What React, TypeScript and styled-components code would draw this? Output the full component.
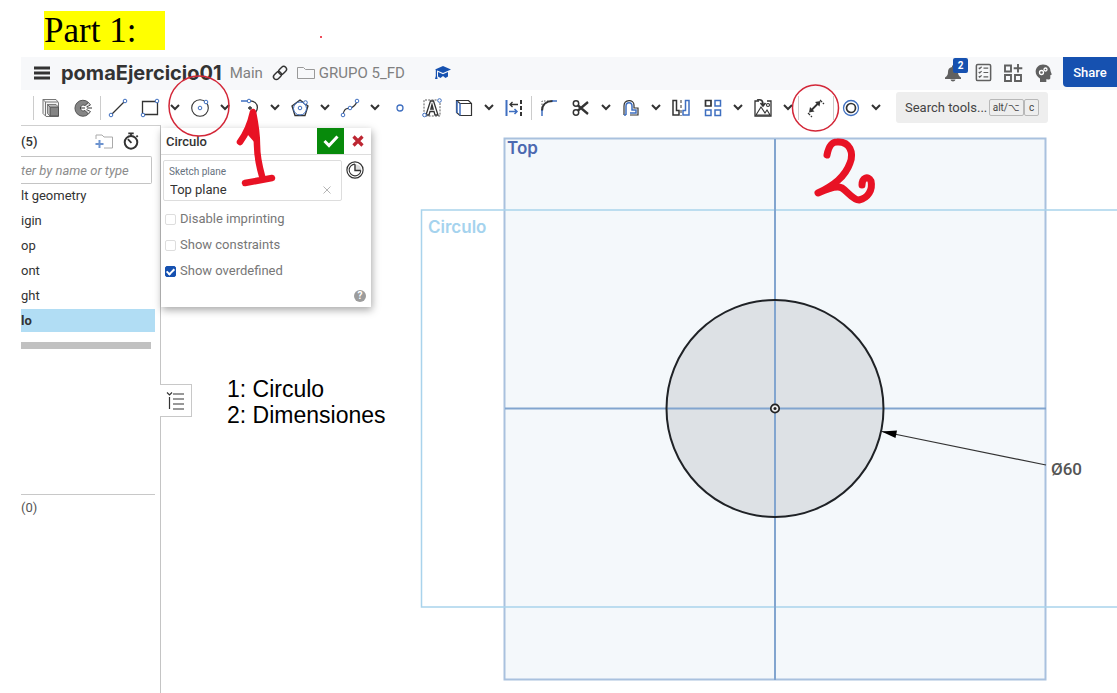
import React from "react";
import styled, { createGlobalStyle } from "styled-components";

const ink = "#333333";
const blue = "#3f6fc0";
const red = "#e81224";

const GlobalStyle = createGlobalStyle`
  * { box-sizing: border-box; }
  body { margin: 0; background: #ffffff; color: ${ink}; font-family: Roboto, "Liberation Sans", sans-serif; font-size: 13px; }
  button, input { font: inherit; color: inherit; }
`;

const Page = styled.div`
  position: relative;
  display: flex;
  flex-direction: column;
  min-height: 100vh;
  overflow: hidden;
`;
const Heading = styled.h1`
  margin: 0;
  padding: 11px 44px 7px;
  font: 400 35px/39px "Liberation Serif", serif;
  color: #000000;
`;
const Highlight = styled.mark`
  display: block;
  width: 121px;
  background: #ffff00;
  color: inherit;
`;
const AppWindow = styled.main`
  display: flex;
  flex: 1;
  flex-direction: column;
  margin-left: 21px;
`;
const DocumentBar = styled.header`
  display: flex;
  align-items: center;
  height: 33px;
  padding: 0 0 2px 9px;
  background: #f7f8fa;
`;
const BarButton = styled.button<{ $width?: number }>`
  position: relative;
  display: grid;
  place-items: center;
  flex: none;
  width: ${(p) => p.$width ?? 30}px;
  height: 30px;
  padding: 0;
  border: 0;
  background: none;
`;
const DocumentName = styled.h2`
  margin: 0 8px 0 7px;
  font-family: Inter, Roboto, sans-serif;
  font-size: 20px;
  line-height: 24px;
  font-weight: 700;
`;
const Crumb = styled.a`
  display: flex;
  align-items: center;
  gap: 4px;
  color: #808080;
  font-size: 15px;
  line-height: 20px;
  text-decoration: none;
  white-space: nowrap;
`;
const Badge = styled.span`
  position: absolute;
  top: 0;
  right: 0;
  width: 15px;
  border-radius: 2px;
  background: #1651b0;
  color: #ffffff;
  font-size: 10px;
  line-height: 15px;
  font-weight: 700;
`;
const Spacer = styled.div`
  flex: 1;
`;
const ShareButton = styled.button`
  align-self: flex-start;
  width: 54px;
  height: 30px;
  margin-left: 5px;
  padding: 0;
  border: 0;
  border-radius: 0 0 0 4px;
  background: #1651b0;
  color: #ffffff;
  font-size: 13px;
  font-weight: 500;
`;
const Toolbar = styled.nav`
  display: flex;
  align-items: center;
  height: 35px;
  padding-left: 11px;
`;
const Divider = styled.span`
  flex: none;
  width: 1px;
  height: 24px;
  margin: 0 1px;
  background: #cccccc;
`;
const ToolButton = styled.button`
  display: grid;
  place-items: center;
  flex: none;
  width: 32px;
  height: 32px;
  padding: 0;
  border: 0;
  background: none;
`;
const MenuButton = styled(ToolButton)`
  width: 18px;
`;
const SearchTools = styled.button`
  display: flex;
  align-items: center;
  flex: none;
  width: 152px;
  height: 31px;
  margin-left: 11px;
  padding: 0 9px;
  border: 0;
  border-radius: 3px;
  background: #eeeeee;
  color: #444444;
  font-size: 13px;
  white-space: nowrap;
`;
const SearchText = styled.span`
  flex: 1;
  text-align: left;
`;
const Key = styled.kbd`
  min-width: 15px;
  padding: 0 3px;
  border: 1px solid #b8b8b8;
  border-radius: 2px;
  font: 10px/15px Roboto, sans-serif;
`;
const Workspace = styled.div`
  display: grid;
  grid-template-columns: 140px 1fr;
  flex: 1;
`;
const Sidebar = styled.aside`
  display: flex;
  flex-direction: column;
  border-top: 1px solid #cfcfcf;
  border-right: 1px solid #c4c4c4;
  padding-right: 5px;
`;
const SidebarHead = styled.div`
  display: flex;
  align-items: center;
  height: 30px;
  padding-right: 12px;
  font-weight: 500;
`;
const FilterInput = styled.input`
  width: 131px;
  height: 28px;
  padding: 0;
  border: 1px solid #c4c4c4;
  border-left: 0;
  border-radius: 0 2px 2px 0;
  outline: none;
  &::placeholder { color: #8c8c8c; font-style: italic; opacity: 1; }
`;
const FeatureList = styled.ul`
  margin: 0;
  padding: 0;
  list-style: none;
`;
const Feature = styled.li<{ $selected?: boolean }>`
  height: 23px;
  margin-bottom: 2px;
  line-height: 24px;
  background: ${(p) => (p.$selected ? "#b1ddf4" : "none")};
  font-weight: ${(p) => (p.$selected ? 700 : 400)};
`;
const RollbackBar = styled.div`
  width: 130px;
  height: 7px;
  margin-top: 8px;
  background: #c1c1c1;
`;
const Parts = styled.div`
  margin-top: 145px;
  padding-top: 3px;
  border-top: 1px solid #c8c8c8;
  line-height: 20px;
  color: #555555;
`;
const Canvas = styled.section`
  position: relative;
  min-height: 567px;
`;
const Drawing = styled.svg`
  position: absolute;
  inset: 0;
  width: 100%;
  height: 100%;
  font-family: Inter, Roboto, sans-serif;
  font-size: 17px;
  font-weight: 600;
`;
const DimensionText = styled.text`
  fill: #555555;
  font-family: Roboto, sans-serif;
  font-weight: 500;
`;
const Dialog = styled.form`
  position: absolute;
  top: 3px;
  left: 0;
  width: 210px;
  height: 179px;
  background: #ffffff;
  box-shadow: 1px 3px 8px rgba(0, 0, 0, 0.35);
`;
const DialogHead = styled.div`
  display: flex;
  align-items: stretch;
  height: 27px;
  border-bottom: 1px solid #dddddd;
`;
const DialogTitle = styled.h3`
  flex: 1;
  margin: 0;
  padding-left: 5px;
  font-size: 13px;
  line-height: 28px;
  font-weight: 500;
`;
const DialogButton = styled.button<{ $accept?: boolean }>`
  display: grid;
  place-items: center;
  width: 27px;
  padding: 0;
  border: 0;
  background: ${(p) => (p.$accept ? "#078a0b" : "none")};
`;
const PlaneRow = styled.div`
  display: flex;
  align-items: flex-start;
  gap: 4px;
  padding: 5px 0 0 2px;
`;
const PlaneField = styled.div`
  display: grid;
  grid-template-columns: 1fr 28px;
  width: 179px;
  height: 41px;
  padding: 3px 0 0 5px;
  border: 1px solid #dddddd;
  border-radius: 2px;
`;
const PlaneLabel = styled.label`
  grid-column: 1 / -1;
  color: #66717d;
  font-size: 10px;
  line-height: 16px;
`;
const PlaneInput = styled.input`
  width: 100%;
  height: 18px;
  padding: 0 0 0 1px;
  border: 0;
  outline: none;
  background: none;
`;
const SmallButton = styled.button`
  display: grid;
  place-items: center;
  height: 20px;
  padding: 0;
  border: 0;
  background: none;
`;
const Options = styled.div`
  display: grid;
  gap: 6px;
  padding: 8px 0 0 4px;
`;
const Option = styled.label`
  display: flex;
  align-items: center;
  gap: 4px;
  line-height: 20px;
  color: #777777;
`;
const CheckBox = styled.input`
  appearance: none;
  display: grid;
  place-items: center;
  width: 11px;
  height: 11px;
  margin: 0;
  border: 1px solid #dddddd;
  border-radius: 2px;
  &:checked { background: #1651b0; border-color: #1651b0; }
  &:checked::after {
    content: "";
    width: 3px;
    height: 6px;
    margin-bottom: 2px;
    border: solid #ffffff;
    border-width: 0 2px 2px 0;
    transform: rotate(45deg);
  }
`;
const HelpButton = styled.button`
  position: absolute;
  right: 5px;
  bottom: 5px;
  width: 12px;
  height: 12px;
  padding: 0;
  border: 0;
  border-radius: 50%;
  background: #9c9c9c;
  color: #ffffff;
  font-size: 10px;
  line-height: 12px;
  font-weight: 700;
`;
const ListToggle = styled.button`
  position: absolute;
  top: 259px;
  left: -1px;
  display: grid;
  place-items: center;
  width: 32px;
  height: 33px;
  padding: 0;
  border: 1px solid #c8c8c8;
  border-left: 0;
  background: #ffffff;
`;
const Note = styled.p`
  position: absolute;
  top: 251px;
  left: 66px;
  margin: 0;
  color: #000000;
  font: 23px/26px "Liberation Sans", sans-serif;
  white-space: pre-line;
`;
const Markup = styled.svg`
  position: absolute;
  top: 0;
  left: 0;
  pointer-events: none;
`;

function Icon({ children, size = 20 }: { children: React.ReactNode; size?: number }) {
  return (
    <svg width={size} height={size} viewBox="0 0 20 20" fill="none" stroke={ink} strokeWidth="1.3" aria-hidden="true">
      {children}
    </svg>
  );
}

function Dot({ x, y }: { x: number; y: number }) {
  return <circle cx={x} cy={y} r="1.8" fill="#ffffff" stroke={blue} strokeWidth="1" />;
}

type Tool = { name: string; menu?: boolean; icon: React.ReactNode };

const solidTools: Tool[] = [
  { name: "Extrude", icon: <><path d="M2 1.500h13l2.500 3v14H5l-3-3z" fill="#f4f4f4" stroke="#777" strokeWidth="1" /><path d="M4.500 18V4H17M2 1.500l2.500 2.500" stroke="#777" strokeWidth="1" /><path d="M9 9h8.500v9H9z" fill="#858585" stroke="#555" strokeWidth="1" /><path d="M9 18V9L6.500 6.500v9zM6.500 6.500H15L17.500 9H9z" fill="#bbb" stroke="#666" strokeWidth=".8" /></> },
  { name: "Revolve", icon: <><path d="M15.500 4.500A8 8 0 1 0 15.500 16L12 12.500a3 3 0 1 1 0-5z" fill="#858585" stroke="#555" strokeWidth="1" /><path d="M12 7.500l3.500-3 2 2.500-4 2M12 12.500l3.500 3.500 2-2.500-4-2" fill="#ddd" stroke="#555" strokeWidth="1" /><path d="M7 10h12" strokeDasharray="5 2" strokeWidth="1" /></> },
];

const drawTools: Tool[] = [
  { name: "Line", icon: <><path d="M3.500 16.500l13-13" /><Dot x={3} y={17} /><Dot x={17} y={3} /></> },
  { name: "Corner rectangle", menu: true, icon: <><path d="M2.500 3.500h15v13h-15z" /><Dot x={3} y={17} /><Dot x={17} y={3} /></> },
  { name: "Center point circle", menu: true, icon: <><circle cx="10" cy="10" r="8.300" strokeWidth="1.100" /><Dot x={10} y={10} /><Dot x={16} y={4} /></> },
  { name: "Tangent arc", menu: true, icon: <><path d="M1 3h7" stroke={blue} strokeWidth="1.500" /><path d="M9 3c11-1 11 13 1 14M10 8v4M8 10h4" /><Dot x={9} y={3} /></> },
  { name: "Polygon", menu: true, icon: <><path d="M10 2l8 6-3 9.500H5L2 8z" /><circle cx="10" cy="10.500" r="6.500" stroke={blue} strokeWidth="1" /><Dot x={10} y={10} /><Dot x={15.5} y={4.5} /></> },
  { name: "Spline", menu: true, icon: <><path d="M3 17C4 9 8 11 10 10c4-1 6-3 7-7" strokeWidth="1.100" /><Dot x={3} y={17} /><Dot x={10} y={10} /><Dot x={17} y={3} /></> },
  { name: "Point", icon: <circle cx="10" cy="10" r="3" stroke={blue} strokeWidth="1.300" /> },
  { name: "Text", icon: <><path d="M2 17V2h14M18 5v13H4" strokeDasharray="2 1.200" strokeWidth=".8" /><path d="M4 17L8.500 3h3L16 17h-3l-1-3.500H8L7 17zM8.800 11h2.400L10 6.500z" strokeWidth="1.300" /><Dot x={2.5} y={17} /><Dot x={17.5} y={2.5} /></> },
  { name: "Use projection", menu: true, icon: <><path d="M2.500 2.500h12l3 3v12H6l-3.500-3zM2.500 2.500l3.500 3h11.500" strokeWidth="1.200" /><path d="M6 5.500v12M3 3v12" stroke={blue} strokeWidth="1.500" /></> },
  { name: "Construction", icon: <><path d="M2.500 2v16" stroke={blue} strokeWidth="2" /><path d="M17 2v16" strokeWidth="2" strokeDasharray="4 2" /><path d="M14 6.500H6M8.500 4L6 6.500 8.500 9" /><path d="M5 13.500h8M10.500 11l2.500 2.500-2.500 2.500" stroke={blue} strokeWidth="1.500" /></> },
];

const editTools: Tool[] = [
  { name: "Sketch fillet", icon: <><path d="M3 13C3 7 7 3 14 3" strokeWidth="2" /><path d="M3 12v6M13 3h5" stroke={blue} strokeWidth="1.500" /><path d="M3 10V3h8" strokeWidth=".8" strokeDasharray="1.500 1.500" /></> },
  { name: "Trim", menu: true, icon: <><circle cx="5" cy="5.500" r="2.700" strokeWidth="1.500" /><circle cx="5" cy="14.500" r="2.700" strokeWidth="1.500" /><path d="M7 7.500l10 8.500M7 12.500L17 4" strokeWidth="2.300" /></> },
  { name: "Offset", menu: true, icon: <><path d="M3 17V8C3 1 13 1 13 7v3h4v7H9" strokeWidth="1.200" /><path d="M5 17V8c0-4.500 6-4.500 6 0v4h4v3H9M3 17h2" stroke={blue} strokeWidth="1.500" /></> },
  { name: "Mirror", icon: <><path d="M2 2.500h3.500v10H8v4.500H2z" strokeWidth="1.500" /><path d="M18 2.500h-3.500v10H12v4.500h6z" stroke={blue} strokeWidth="1.500" /><path d="M10 2v16" strokeWidth="1" strokeDasharray="3 2" /></> },
  { name: "Linear pattern", menu: true, icon: <><path d="M2.500 2.500h5.500v5.500H2.500z" strokeWidth="1.700" /><path d="M12 2.500h5.500v5.500H12zM2.500 12h5.500v5.500H2.500zM12 12h5.500v5.500H12z" stroke={blue} strokeWidth="1.500" /></> },
  { name: "Insert image", menu: true, icon: <><path d="M6 3H2v15h16V3h-4" /><path d="M3 17l5-8 4 6 2-3 3 5z" strokeWidth="1.100" /><circle cx="15" cy="7" r="1.500" strokeWidth="1.100" /><path d="M4 2c5-1 6 1 6 5M7.500 5L10 8l2.500-3" strokeWidth="1.700" /></> },
];

const dimensionTool: Tool = {
  name: "Dimension",
  icon: <><path d="M5 12.500L12.500 5" strokeWidth="1.800" /><path d="M3 14.500l1-5.500 4.500 4.500zM14.500 3l-1 5.500L9 4z" fill={ink} stroke="none" /><path d="M2 15l4 4M14 2l4 4" strokeWidth="1.200" strokeDasharray="3 1" /></>,
};

const constraintTool: Tool = {
  name: "Concentric",
  menu: true,
  icon: <><circle cx="10" cy="10" r="7.500" stroke={blue} strokeWidth="1.300" /><circle cx="10" cy="10" r="4.500" strokeWidth="1.700" /></>,
};

function ToolItem({ tool }: { tool: Tool }) {
  return (
    <>
      <ToolButton type="button" aria-label={tool.name}><Icon>{tool.icon}</Icon></ToolButton>
      {tool.menu && (
        <MenuButton type="button" aria-label={`${tool.name} options`}>
          <svg width="10" height="7" viewBox="0 0 10 7" fill="none" stroke={ink} strokeWidth="2"><path d="M1 1l4 4 4-4" /></svg>
        </MenuButton>
      )}
    </>
  );
}

function DocumentHeader() {
  return (
    <DocumentBar>
      <BarButton $width={24} type="button" aria-label="Menu">
        <svg width="16" height="14" stroke={ink} strokeWidth="3"><path d="M0 2h16M0 7h16M0 12h16" /></svg>
      </BarButton>
      <DocumentName>pomaEjercicio01</DocumentName>
      <Crumb href="#main">Main</Crumb>
      <BarButton $width={34} type="button" aria-label="Copy link">
        <Icon size={16}><g transform="rotate(-45 10 10)" strokeWidth="1.800"><rect x="0" y="6.500" width="11" height="7" rx="3.500" /><rect x="9" y="6.500" width="11" height="7" rx="3.500" /></g></Icon>
      </BarButton>
      <Crumb href="#folder">
        <svg width="18" height="14" fill="none" stroke="#999999"><path d="M.5 12.500v-11h6l2 2h9v9z" /></svg>
        GRUPO 5_FD
      </Crumb>
      <BarButton $width={76} type="button" aria-label="Learning center">
        <svg width="16" height="14" viewBox="0 0 16 14" fill="#1651b0"><path d="M8 0l8 3.500-8 3.500-8-3.500zM3 6l5 2.200L13 6v4.500L10.500 12 8 10l-2.500 2L3 10.500zM.8 4h1.200v6l.6 3H0l.8-3z" /></svg>
      </BarButton>
      <Spacer />
      <BarButton type="button" aria-label="Notifications">
        <svg width="18" height="18" viewBox="0 0 18 18" fill="#606060"><path d="M8 1.500h2V3c3 .6 4 2.500 4 5 0 3 1 4 3 5.500v1.500H1v-1.500C3 12 4 11 4 8c0-2.500 1-4.400 4-5zM6.500 15.500h5c-.5 2.500-4.500 2.500-5 0z" /></svg>
        <Badge>2</Badge>
      </BarButton>
      <BarButton type="button" aria-label="Tasks">
        <Icon size={19}><g stroke="#606060" strokeWidth="1.600"><rect x="2.500" y="1.500" width="15" height="17" rx="1.500" /><path d="M5 5l1 1 2-2M5 9.500l1 1 2-2M5 14l1 1 2-2M10 5.500h5M10 10h5M10 14.500h5" strokeWidth="1.300" /></g></Icon>
      </BarButton>
      <BarButton type="button" aria-label="Apps">
        <Icon><path d="M2 2.500h6v6H2zM2 12h6v6H2zM12 12h6v6h-6zM15 1v8.500M10.700 5.300h8.600" stroke="#606060" strokeWidth="1.900" /></Icon>
      </BarButton>
      <BarButton type="button" aria-label="Advisor">
        <svg width="17" height="18" viewBox="0 0 17 18" fill="#606060"><path d="M8 .5c5 0 7.500 3 7.500 6.500l1.300 3.500-1.500.7v3c0 1.300-2 1.300-4 1.100V18H5v-3.500C-2.500 10 .5.500 8 .500z" /><g fill="none" stroke="#fff" strokeWidth="1.300"><circle cx="6.500" cy="8.500" r="2" /><circle cx="10.500" cy="5.500" r="1.500" /></g></svg>
      </BarButton>
      <ShareButton type="button">Share</ShareButton>
    </DocumentBar>
  );
}

function SketchDialog() {
  return (
    <Dialog>
      <DialogHead>
        <DialogTitle>Circulo</DialogTitle>
        <DialogButton $accept type="button" aria-label="Accept">
          <svg width="16" height="13" fill="none" stroke="#ffffff" strokeWidth="3"><path d="M1.500 6l4.500 4.500 8.500-9" /></svg>
        </DialogButton>
        <DialogButton type="button" aria-label="Cancel">
          <svg width="12" height="12" stroke="#bd2632" strokeWidth="3.200"><path d="M1.500 1.500l9 9M10.500 1.500l-9 9" /></svg>
        </DialogButton>
      </DialogHead>
      <PlaneRow>
        <PlaneField>
          <PlaneLabel htmlFor="plane">Sketch plane</PlaneLabel>
          <PlaneInput id="plane" defaultValue="Top plane" />
          <SmallButton type="button" aria-label="Clear plane">
            <svg width="8" height="8" stroke="#b5b5b5"><path d="M.5.5l7 7M7.500.5l-7 7" /></svg>
          </SmallButton>
        </PlaneField>
        <SmallButton type="button" aria-label="Final view">
          <Icon size={18}><path d="M11 3.500a7 7 0 0 1 6 6.500h-6z" fill="#dddddd" stroke="none" /><circle cx="10" cy="10" r="9" /><path d="M10 3.500a6.500 6.500 0 1 0 6.500 7" strokeWidth="1.200" /><path d="M10 3.500v7h6.500" strokeWidth="1.600" /></Icon>
        </SmallButton>
      </PlaneRow>
      <Options>
        <Option><CheckBox type="checkbox" />Disable imprinting</Option>
        <Option><CheckBox type="checkbox" />Show constraints</Option>
        <Option><CheckBox type="checkbox" defaultChecked />Show overdefined</Option>
      </Options>
      <HelpButton type="button">?</HelpButton>
    </Dialog>
  );
}

/* Coordinates are measured from the sketch origin. */
function Sketch() {
  return (
    <Drawing>
      <g transform="translate(614 284)" fill="none">
        <rect x="-270.500" y="-270.500" width="541" height="541" fill="#f4f8fb" stroke="#a9c1de" strokeWidth="2" />
        <rect x="-353.500" y="-199" width="900" height="397" stroke="#a9d3ec" strokeWidth="1.500" />
        <circle cy="-.5" r="108.500" fill="#dde1e5" />
        <path d="M-270-.5h541M0-270v541" stroke="#82a5cf" strokeWidth="2" />
        <circle cy="-.5" r="108.500" stroke="#1f2226" strokeWidth="2" />
        <circle cy="-.5" r="4.200" fill="#eeeeee" stroke="#222" strokeWidth="1.700" />
        <circle cy="-.5" r="1.500" fill="#222" />
        <path d="M107 22.500L271 56" stroke="#333" strokeWidth="1.200" />
        <path d="M106.500 22.500l15.500-1-1.500 7.500z" fill="#000" />
        <text x="-268" y="-255" fill="#4c69b0">Top</text>
        <text x="-347" y="-176" fill="#a5d3ee">Circulo</text>
        <DimensionText x="276" y="66">Ø60</DimensionText>
      </g>
    </Drawing>
  );
}

export default function App() {
  return (
    <Page>
      <GlobalStyle />
      <Heading><Highlight>Part 1:</Highlight></Heading>
      <AppWindow>
        <DocumentHeader />
        <Toolbar>
          <Divider />
          {solidTools.map((tool) => <ToolItem key={tool.name} tool={tool} />)}
          <Divider />
          {drawTools.map((tool) => <ToolItem key={tool.name} tool={tool} />)}
          <Divider />
          {editTools.map((tool) => <ToolItem key={tool.name} tool={tool} />)}
          <Divider />
          <ToolItem tool={dimensionTool} />
          <Divider />
          <ToolItem tool={constraintTool} />
          <SearchTools type="button"><SearchText>Search tools...</SearchText><Key>alt/⌥</Key><Key>c</Key></SearchTools>
        </Toolbar>
        <Workspace>
          <Sidebar>
            <SidebarHead>
              (5)
              <Spacer />
              <BarButton type="button" aria-label="Add folder">
                <svg width="18" height="15" fill="none" stroke="#aaaaaa"><path d="M1 5V1h6l2 2h8.500v11H9" /><path d="M4.500 6v8M.5 10h8" stroke="#6d93cf" strokeWidth="2" /></svg>
              </BarButton>
              <BarButton $width={24} type="button" aria-label="Regeneration times">
                <Icon size={18}><circle cx="10" cy="11.500" r="7" strokeWidth="2.200" /><path d="M7 1.500h6M10 1.500v3M16 4l1.500 1.500M6.500 8l4 4" strokeWidth="2" /></Icon>
              </BarButton>
            </SidebarHead>
            <FilterInput aria-label="Filter by name or type" placeholder="ter by name or type" />
            <FeatureList>
              {["lt geometry", "igin", "op", "ont", "ght"].map((name) => <Feature key={name}>{name}</Feature>)}
              <Feature $selected>lo</Feature>
            </FeatureList>
            <RollbackBar />
            <Parts>(0)</Parts>
          </Sidebar>
          <Canvas>
            <Sketch />
            <SketchDialog />
            <ListToggle type="button" aria-label="Toggle feature list">
              <Icon><path d="M7 3h11M7 8h11M7 13h11M7 18h11M3.500 6v12M1 1.500l2.500 2.500L6 1.500" strokeWidth="1.200" /></Icon>
            </ListToggle>
            <Note>{"1: Circulo\n2: Dimensiones"}</Note>
          </Canvas>
        </Workspace>
      </AppWindow>
      <Markup width="900" height="220" fill="none" stroke={red} strokeLinecap="round" strokeLinejoin="round">
        <circle cx="321" cy="37" r="1" fill={red} stroke="none" />
        <ellipse cx="199" cy="106" rx="30" ry="30" strokeWidth="1.500" stroke="#d32738" />
        <circle cx="815.500" cy="108" r="23" strokeWidth="1.500" stroke="#d32738" />
        <path d="M240 142Q249 130 253 112Q257 132 257 145T262 176M245 183L272 178" strokeWidth="6.500" />
        <path d="M253 113L248 132L255 140Z" fill={red} strokeWidth="4" />
        <path d="M827 155C829 145 832 142 837 142C850 141 854 153 850 163C845 177 834 185 818 193C827 189 836 185 842 188C848 192 853 200 859 200C868 198 873 190 871 181C868 175 862 178 862 185" strokeWidth="7" />
      </Markup>
    </Page>
  );
}
